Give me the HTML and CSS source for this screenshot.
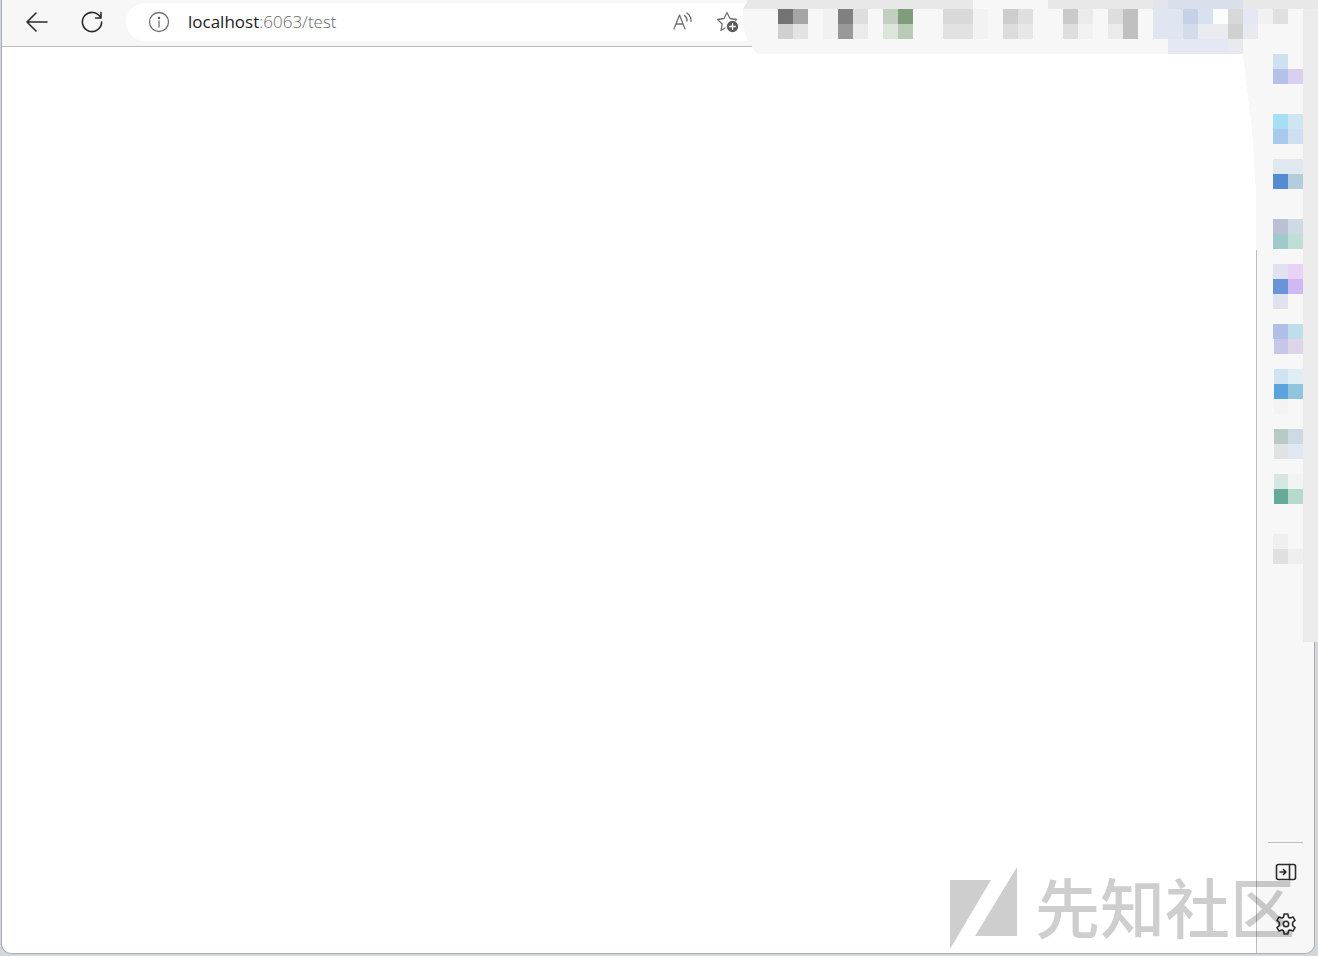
FILE: index.html
```html
<!DOCTYPE html>
<html lang="en">
<head>
<meta charset="utf-8">
<title>localhost:6063/test</title>
<link rel="stylesheet" href="styles.css">
</head>
<body>
<div class="window">
  <header class="toolbar">
    <button class="tool" aria-label="Back">
      <svg width="24" height="24" viewBox="0 0 24 24"><path d="M22 12H2.500M11 3L2 12l9 9"/></svg>
    </button>
    <button class="tool" aria-label="Refresh">
      <svg width="24" height="24" viewBox="0 0 24 24"><path d="M20.500 7.500A9.600 9.600 0 1 0 21.600 12M21 2.500v5.500h-5.500"/></svg>
    </button>
    <div class="address">
      <button class="info" aria-label="View site information">
        <svg width="22" height="22" viewBox="0 0 22 22"><circle cx="11" cy="11" r="9.500"/><path d="M11 10v6"/><circle class="solid" cx="11" cy="7" r=".6"/></svg>
      </button>
      <a class="url" href="#"><span class="host">localhost</span>:6063/test</a>
      <button class="info" aria-label="Read aloud">
        <svg width="22" height="22" viewBox="0 0 22 22"><path d="M2 18L7.500 4 13 18M4 13h7M12.500 4.500q3 2.300 2.500 5.500M15 2q4.500 3.500 4 8.500"/></svg>
      </button>
      <button class="info favorite" aria-label="Add to favorites">
        <svg width="24" height="24" viewBox="0 0 24 24"><path d="M9 18l-4 2.500 1.200-6.500L1.500 9.500l6.500-1L11 2.500l3 6 6.500 1-1 1"/><circle class="solid" cx="16.500" cy="16.500" r="5"/><path class="plus" d="M16.500 13.700v5.600M13.700 16.500h5.600"/></svg>
      </button>
    </div>
  </header>
  <div class="body">
    <main class="page"></main>
    <aside class="sidebar">
      <hr class="rule">
      <button class="side" aria-label="Hide sidebar">
        <svg width="22" height="18" viewBox="0 0 22 18"><rect x="1.500" y="1.500" width="19" height="15" rx="2"/><path d="M14.500 1.500v15M5 9h6M8.500 6.500L11 9l-2.500 2.500"/></svg>
      </button>
      <button class="side" aria-label="Settings">
        <svg width="24" height="24" viewBox="0 0 24 24"><path d="M10.200 2h3.600l.7 3.200 1.500.9 3.100-1 1.900 3.200-2.400 2.200v3l2.400 2.200-1.900 3.200-3.100-1-1.500.9-.7 3.200h-3.600l-.7-3.200-1.500-.9-3.100 1L3 15.700l2.400-2.200v-3L3 8.300l1.900-3.200 3.100 1 1.500-.9z"/><circle cx="12" cy="12" r="2.700"/></svg>
      </button>
    </aside>
  </div>
</div>

<svg class="mosaic" width="575" height="642" viewBox="743 0 575 642" shape-rendering="crispEdges" aria-hidden="true">
  <path fill="#f7f7f7" d="M743 9l5-9h570v642h-15v-80h-46V250h-1V190l-4-60-5-40-4-36H757l-10-14-4-14z"/>
  <path fill="#e8e8e8" d="M748 0h225v9H743zM1048 0h270v9h-270z"/>
  <path fill="#ebebeb" d="M1303 9h15v633h-15z"/>
  <path fill="#d9dfeb" d="M1168 0h75v9h-75z"/><path fill="#e3e5ec" d="M1153 0h15v9h-15z"/>
  <path fill="#737373" d="M778 9h15v15h-15z"/><path fill="#a5a5a5" d="M793 9h15v15h-15z"/>
  <path fill="#d0d0d0" d="M778 24h15v15h-15z"/><path fill="#e3e3e3" d="M793 24h15v15h-15z"/>
  <path fill="#f1f1f1" d="M823 9h15v30h-15z"/>
  <path fill="#808080" d="M838 9h15v15h-15z"/><path fill="#999" d="M838 24h15v15h-15z"/>
  <path fill="#dedede" d="M853 9h15v15h-15z"/><path fill="#ebebeb" d="M853 24h15v15h-15z"/>
  <path fill="#c3d0c1" d="M883 9h15v15h-15z"/><path fill="#7f9c7b" d="M898 9h15v15h-15z"/>
  <path fill="#dbe5da" d="M883 24h15v15h-15z"/><path fill="#b8ccb5" d="M898 24h15v15h-15z"/>
  <path fill="#d9d9d9" d="M943 9h30v15h-30z"/><path fill="#e2e2e2" d="M943 24h30v15h-30z"/>
  <path fill="#f2f2f2" d="M973 9h15v30h-15z"/>
  <path fill="#cdcdcd" d="M1003 9h15v15h-15z"/><path fill="#dfdfdf" d="M1018 9h15v15h-15z"/>
  <path fill="#dcdcdc" d="M1003 24h15v15h-15z"/><path fill="#e7e7e7" d="M1018 24h15v15h-15z"/>
  <path fill="#cacaca" d="M1063 9h15v15h-15z"/><path fill="#ebebeb" d="M1078 9h15v15h-15z"/>
  <path fill="#dedede" d="M1063 24h15v15h-15z"/><path fill="#f2f2f2" d="M1078 24h15v15h-15z"/>
  <path fill="#dedede" d="M1108 9h15v15h-15z"/><path fill="#ebebeb" d="M1108 24h15v15h-15z"/>
  <path fill="#c0c0c0" d="M1123 9h15v30h-15z"/>
  <path fill="#dfe5f1" d="M1153 9h30v30h-30z"/>
  <path fill="#c5d1e7" d="M1183 9h15v15h-15z"/><path fill="#d8e1ee" d="M1198 9h15v15h-15z"/>
  <path fill="#d4dceb" d="M1183 24h15v15h-15z"/><path fill="#e9ebef" d="M1198 24h30v15h-30z"/>
  <path fill="#fbfcfc" d="M1213 9h15v15h-15z"/>
  <path fill="#d8d8d8" d="M1228 9h15v15h-15z"/><path fill="#d0d0d0" d="M1228 24h15v15h-15z"/>
  <path fill="#e3e8f4" d="M1243 9h15v15h-15zM1168 39h60v15h-60z"/><path fill="#e8eaf0" d="M1243 24h15v15h-15zM1228 39h15v15h-15z"/>
  <path fill="#f1f1f1" d="M1258 9h15v15h-15z"/><path fill="#e0e0e0" d="M1273 9h15v15h-15z"/>

  <path fill="#cfe1ef" d="M1273 54h15v15h-15z"/><path fill="#b4c2e7" d="M1273 69h15v15h-15z"/><path fill="#d8d0ee" d="M1288 69h15v15h-15z"/>
  <path fill="#a6def5" d="M1273 114h15v15h-15z"/><path fill="#cfe5f2" d="M1288 114h15v15h-15z"/>
  <path fill="#a9caed" d="M1273 129h15v15h-15z"/><path fill="#cddff1" d="M1288 129h15v15h-15z"/>
  <path fill="#dfe9ef" d="M1273 159h30v15h-30z"/><path fill="#558bd2" d="M1273 174h15v15h-15z"/><path fill="#b4cddc" d="M1288 174h15v15h-15z"/>
  <path fill="#bbc0d4" d="M1273 219h15v15h-15z"/><path fill="#cedbe7" d="M1288 219h15v15h-15z"/>
  <path fill="#a0c9cc" d="M1273 234h15v15h-15z"/><path fill="#c0dfd4" d="M1288 234h15v15h-15z"/>
  <path fill="#e0e2f0" d="M1273 264h15v15h-15zM1273 294h15v15h-15z"/><path fill="#e9d3f5" d="M1288 264h15v15h-15z"/>
  <path fill="#6994d8" d="M1273 279h15v15h-15z"/><path fill="#d0b8f4" d="M1288 279h15v15h-15z"/>
  <path fill="#b0bee8" d="M1273 324h15v15h-15z"/><path fill="#bedeeb" d="M1288 324h15v15h-15z"/>
  <path fill="#c8c6e8" d="M1274 339h14v15h-14z"/><path fill="#ded6e8" d="M1288 339h15v15h-15z"/>
  <path fill="#cfe3f1" d="M1274 369h14v15h-14z"/><path fill="#dfedf4" d="M1288 369h15v15h-15z"/>
  <path fill="#5ba3dd" d="M1274 384h14v15h-14z"/><path fill="#91c5de" d="M1288 384h15v15h-15z"/>
  <path fill="#f1f3f4" d="M1274 399h14v15h-14z"/>
  <path fill="#b8cac4" d="M1274 429h14v15h-14z"/><path fill="#cddae5" d="M1288 429h15v15h-15z"/>
  <path fill="#dfe3e3" d="M1274 444h14v15h-14z"/><path fill="#e1e8f4" d="M1288 444h15v15h-15z"/>
  <path fill="#d4e8e1" d="M1274 474h14v15h-14z"/><path fill="#f1f4f3" d="M1288 474h15v15h-15z"/>
  <path fill="#66ab9a" d="M1274 489h14v15h-14z"/><path fill="#b5dacb" d="M1288 489h15v15h-15z"/>
  <path fill="#efefef" d="M1273 534h15v15h-15zM1288 549h15v15h-15z"/><path fill="#e0e0e0" d="M1273 549h15v15h-15z"/>
</svg>

<div class="watermark">
  <svg width="67" height="82" viewBox="0 0 67 82"><path d="M0 13h41L0 82zM67 0v69H25z"/></svg>
  <span>先知社区</span>
</div>
</body>
</html>
```
FILE: styles.css
```css
* { box-sizing: border-box; }

body {
  margin: 0;
  height: 100vh;
  padding: 0 3px 2px 1px;
  background: #d3d6da;
  font-family: "Open Sans", "Noto Sans", sans-serif;
  overflow: hidden;
}

button {
  display: flex;
  padding: 0;
  border: 0;
  background: none;
}

svg {
  display: block;
  fill: none;
  stroke: #2b2b2b;
  stroke-width: 1.6;
  stroke-linecap: round;
  stroke-linejoin: round;
}

.window {
  display: flex;
  flex-direction: column;
  height: 100%;
  border: 1px solid #a9adb1;
  border-top: 0;
  border-radius: 0 0 10px 10px;
  background: #fff;
  overflow: hidden;
}

.toolbar {
  display: flex;
  flex: none;
  align-items: center;
  gap: 31px;
  height: 47px;
  padding: 0 4px 3px 23px;
  border-bottom: 1px solid #bcbcbc;
  background: #f7f7f7;
}

.address {
  display: flex;
  flex: 1;
  align-items: center;
  height: 38px;
  margin-left: -9px;
  padding: 0 570px 0 22px;
  border-radius: 19px;
  background: #fff;
}

.info svg { stroke: #707070; stroke-width: 1.3; }
.info .solid { fill: #5c5c5c; stroke: #5c5c5c; }
.info .plus { stroke: #fff; }
.favorite { margin-left: 22px; }

.url {
  flex: 1;
  margin-left: 18px;
  color: #666;
  font-size: 17px;
  font-weight: 300;
  line-height: 24px;
  text-decoration: none;
}

.host {
  color: #222;
  font-weight: 400;
}

.body {
  display: flex;
  flex: 1;
}

.page { flex: 1; }

.sidebar {
  display: flex;
  flex-direction: column;
  justify-content: flex-end;
  align-items: center;
  width: 58px;
  padding-bottom: 17px;
  border-left: 1px solid #bcbcbc;
  background: #f7f7f7;
}

.rule {
  width: 35px;
  height: 1px;
  margin: 0 0 20px;
  border: 0;
  background: #bdbdbd;
}

.side + .side { margin-top: 31px; }

.mosaic {
  position: absolute;
  top: 0;
  right: 0;
  stroke: none;
}

.watermark {
  position: absolute;
  right: 23px;
  bottom: 7px;
  display: flex;
  align-items: flex-start;
  gap: 18px;
  opacity: 0.19;
  color: #000;
  font-family: "Noto Sans CJK SC", sans-serif;
  font-size: 65px;
  font-weight: 500;
  line-height: 76px;
  pointer-events: none;
}

.watermark svg { fill: #000; stroke: none; }
```
